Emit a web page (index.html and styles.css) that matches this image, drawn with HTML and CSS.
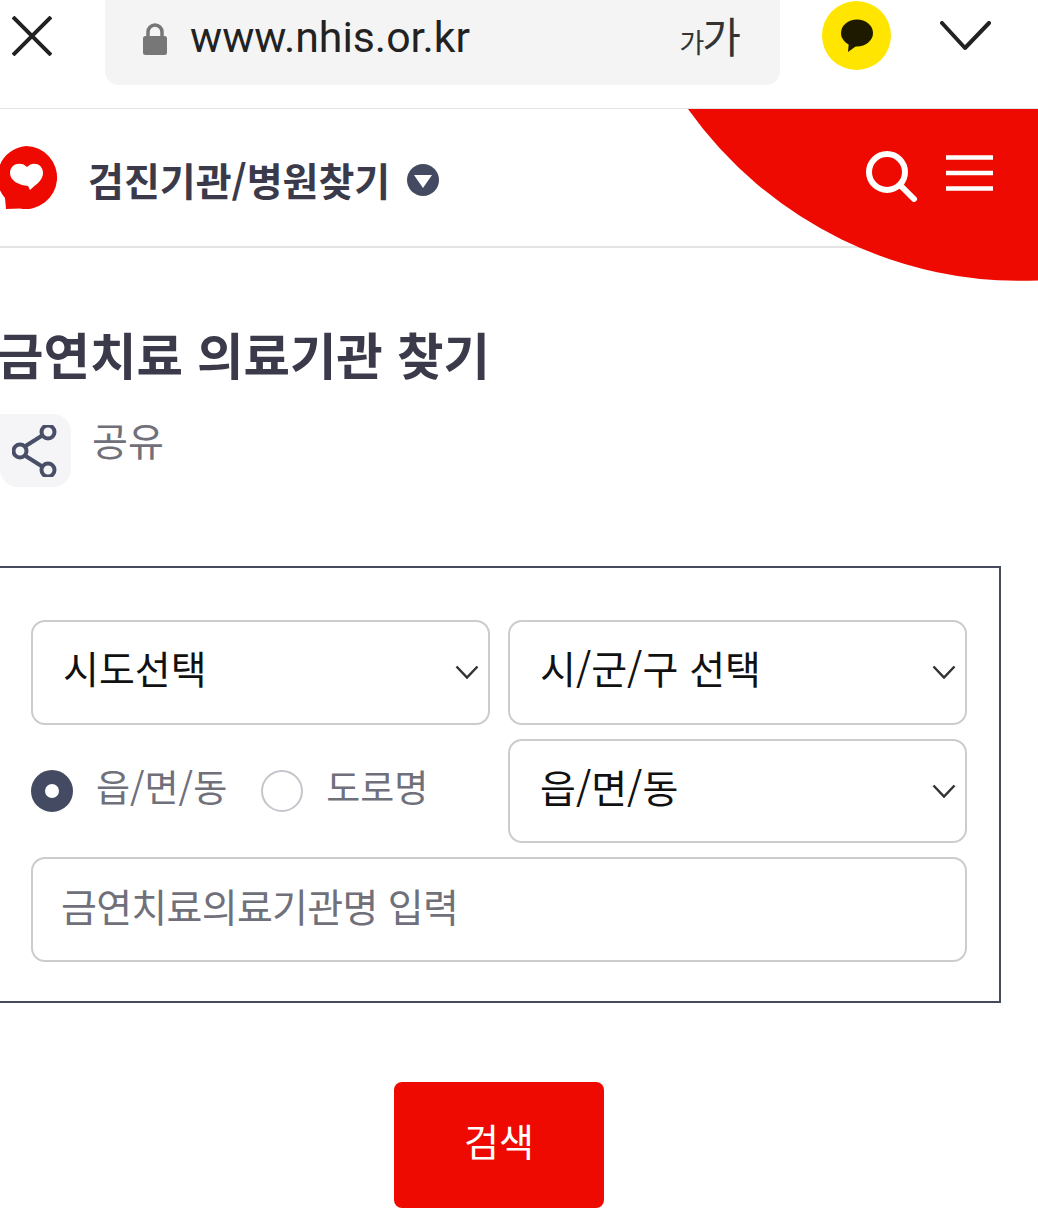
FILE: index.html
```html
<!DOCTYPE html>
<html lang="ko">
<head>
  <meta charset="utf-8">
  <title>금연치료 의료기관 찾기</title>
  <link rel="stylesheet" href="styles.css">
</head>
<body>
  <!-- Browser toolbar -->
  <div class="toolbar">
    <svg class="close-icon" width="40" height="40" viewBox="0 0 40 40"><path d="M1 1L39 39M39 1L1 39" /></svg>
    <div class="url-box">
      <svg class="lock-icon" width="26" height="33" viewBox="0 0 26 33"><path class="lock-loop" d="M6 15V9a7 7 0 0 1 14 0v6" /><rect x="1" y="13" width="24" height="19" rx="2.5" /></svg>
      <span class="url-text">www.nhis.or.kr</span>
      <span class="text-size"><span class="text-size-small">가</span>가</span>
    </div>
    <div class="kakao-btn">
      <svg width="36" height="34" viewBox="0 0 36 34"><ellipse cx="18" cy="14" rx="16" ry="13.5" /><path d="M10 22L9 33L20 25Z" /></svg>
    </div>
    <svg class="chevron-icon" width="54" height="30" viewBox="0 0 54 30"><path d="M2 2L25 27L49 2" /></svg>
  </div>

  <!-- Site header -->
  <header class="site-header">
    <svg class="header-arc" width="350" height="172" viewBox="0 0 350 172"><path d="M0 0A408 408 0 0 0 350 171.5V0Z" /></svg>
    <svg class="logo" width="60" height="66" viewBox="0 0 60 66">
      <path class="logo-bubble" d="M26 1a31.5 31.500 0 1 1 -6 62.500l-14 .5l-1-11a31.500 31.500 0 0 1 21-52Z" />
      <path class="logo-heart" d="M27 22c5-6 16-4 16 6c0 8-8 12-13 17l-2-4c-9-1-18-5-18-13c0-10 12-12 17-6Z" />
    </svg>
    <span class="site-title">검진기관/병원찾기</span>
    <svg class="title-arrow" width="32" height="32" viewBox="0 0 32 32"><circle cx="16" cy="16" r="16" /><path d="M7 11H25L16 24Z" /></svg>
    <svg class="search-icon" width="52" height="52" viewBox="0 0 52 52"><circle cx="21" cy="22" r="18" /><path d="M34 35L48 49" /></svg>
    <svg class="menu-icon" width="47" height="38" viewBox="0 0 47 38"><path d="M0 2.500H47M0 18H47M0 33.500H47" /></svg>
  </header>

  <main class="content">
    <h1 class="page-title">금연치료 의료기관 찾기</h1>
    <div class="share-row">
      <div class="share-btn">
        <svg width="46" height="52" viewBox="0 0 46 52"><path d="M12 22L31 10M12 30L31 42" /><circle cx="8" cy="26" r="6.500" /><circle cx="36" cy="7" r="6.500" /><circle cx="36" cy="45" r="6.500" /></svg>
      </div>
      <span class="share-label">공유</span>
    </div>

    <form class="search-box">
      <div class="field select-field">
        <span>시도선택</span>
        <svg class="select-arrow" width="24" height="14" viewBox="0 0 24 14"><path d="M1.500 1.500L12 12.500L22.500 1.500" /></svg>
      </div>
      <div class="field select-field">
        <span>시/군/구 선택</span>
        <svg class="select-arrow" width="24" height="14" viewBox="0 0 24 14"><path d="M1.500 1.500L12 12.500L22.500 1.500" /></svg>
      </div>
      <div class="radio-row">
        <span class="radio radio-on"></span>
        <span class="radio-label">읍/면/동</span>
        <span class="radio"></span>
        <span class="radio-label">도로명</span>
      </div>
      <div class="field select-field">
        <span>읍/면/동</span>
        <svg class="select-arrow" width="24" height="14" viewBox="0 0 24 14"><path d="M1.500 1.500L12 12.500L22.500 1.500" /></svg>
      </div>
      <div class="field name-field">금연치료의료기관명 입력</div>
    </form>

    <div class="button-row">
      <button type="button" class="search-btn">검색</button>
    </div>
  </main>
</body>
</html>
```

FILE: styles.css
```css
html, body {
  margin: 0;
  padding: 0;
}
body {
  width: 1038px;
  height: 1232px;
  overflow: hidden;
  background: #fff;
  font-family: "Noto Sans CJK KR", "Noto Sans", sans-serif;
  color: #3a3a4a;
}

/* Browser toolbar */
.toolbar {
  display: flex;
  align-items: flex-start;
  height: 108px;
  border-bottom: 1px solid #e4e4e4;
  box-sizing: content-box;
}
.close-icon {
  margin: 16px 0 0 12px;
  fill: none;
  stroke: #222;
  stroke-width: 4;
}
.url-box {
  display: flex;
  align-items: center;
  width: 675px;
  height: 85px;
  margin-left: 53px;
  background: #f4f4f4;
  border-radius: 0 0 14px 14px;
  box-sizing: border-box;
  padding: 0 41px 10px 37px;
}
.lock-icon {
  fill: #777;
  flex-shrink: 0;
  margin-top: 4px;
}
.lock-loop {
  fill: none;
  stroke: #777;
  stroke-width: 3.500;
}
.url-text {
  margin-left: 22px;
  margin-bottom: 2px;
  font-family: Roboto, sans-serif;
  font-size: 42.8px;
  color: #222;
}
.text-size {
  margin-left: auto;
  margin-bottom: 6px;
  font-size: 42px;
  letter-spacing: -2px;
  color: #333;
}
.text-size-small {
  font-size: 27px;
}
.kakao-btn {
  display: flex;
  align-items: center;
  justify-content: center;
  width: 69px;
  height: 69px;
  margin: 1px 0 0 42px;
  border-radius: 50%;
  background: #ffe500;
  flex-shrink: 0;
}
.kakao-btn svg {
  fill: #1e1a00;
}
.chevron-icon {
  margin: 21px 0 0 49px;
  fill: none;
  stroke: #222;
  stroke-width: 4;
  stroke-linecap: round;
  stroke-linejoin: round;
  flex-shrink: 0;
}

/* Site header */
.site-header {
  position: relative;
  display: flex;
  align-items: center;
  height: 137px;
  border-bottom: 2px solid #e4e4e4;
}
.header-arc {
  position: absolute;
  top: 0;
  left: 688px;
  fill: #ee0a00;
}
.logo {
  position: absolute;
  top: 36px;
  left: 0;
}
.logo-bubble {
  fill: #ee0a00;
}
.logo-heart {
  fill: #fff;
}
.site-title {
  margin-left: 88px;
  margin-top: 2px;
  font-size: 39px;
  font-weight: 700;
  color: #3a3a4a;
}
.title-arrow {
  margin-left: 17px;
  margin-top: 4px;
  fill: #454a63;
}
.title-arrow path {
  fill: #fff;
}
.search-icon {
  position: absolute;
  top: 41px;
  left: 866px;
  fill: none;
  stroke: #fff;
  stroke-width: 6;
  stroke-linecap: round;
}
.menu-icon {
  position: absolute;
  top: 46px;
  left: 946px;
  fill: none;
  stroke: #fff;
  stroke-width: 4.500;
}

/* Page content */
.content {
  padding-top: 69px;
}
.page-title {
  margin: 0 0 0 -3px;
  font-size: 50.5px;
  line-height: 72px;
  font-weight: 700;
  color: #3a3a4a;
}
.share-row {
  display: flex;
  align-items: flex-start;
  margin-top: 25px;
}
.share-btn {
  display: flex;
  align-items: center;
  justify-content: center;
  width: 71px;
  height: 73px;
  background: #f5f5f7;
  border-radius: 0 18px 18px 18px;
  box-sizing: border-box;
  padding-right: 2px;
}
.share-btn svg {
  fill: none;
  stroke: #4a4f68;
  stroke-width: 4;
}
.share-label {
  margin: -2px 0 0 21px;
  font-size: 39px;
  line-height: 54px;
  color: #70707a;
}

/* Search form */
.search-box {
  display: grid;
  grid-template-columns: 459px 459px;
  grid-auto-rows: 104.5px;
  column-gap: 18px;
  row-gap: 14px;
  width: 1021px;
  height: 436.500px;
  margin: 79px 0 0 -20px;
  padding: 52px 0 0 49px;
  border: 2px solid #454a5c;
  box-sizing: border-box;
}
.field {
  display: flex;
  align-items: center;
  border: 2px solid #ccc;
  border-radius: 14px;
  box-sizing: border-box;
  background: #fff;
}
.select-field {
  justify-content: space-between;
  padding: 0 9px 10px 30px;
  font-size: 39px;
  color: #111;
}
.select-arrow {
  fill: none;
  stroke: #333;
  stroke-width: 2.500;
  margin-top: 10px;
}
.name-field {
  grid-column: 1 / 3;
  padding: 0 0 8px 28px;
  font-size: 39px;
  letter-spacing: -0.700px;
  color: #70707a;
}
.radio-row {
  display: flex;
  align-items: center;
}
.radio {
  width: 42px;
  height: 42px;
  border: 2px solid #c4c6cc;
  border-radius: 50%;
  box-sizing: border-box;
  flex-shrink: 0;
}
.radio-on {
  border: 14px solid #454a63;
  background: #fff;
}
.radio-label {
  margin: 0 34px 10px 23px;
  font-size: 37px;
  color: #70707a;
  white-space: nowrap;
}

.button-row {
  display: flex;
  justify-content: center;
  width: 998px;
  margin-top: 79px;
}
.search-btn {
  width: 210px;
  height: 126px;
  border: none;
  border-radius: 8px;
  background: #ee0a00;
  color: #fff;
  font-family: inherit;
  font-size: 38px;
  padding: 0 0 11px 0;
}
```
